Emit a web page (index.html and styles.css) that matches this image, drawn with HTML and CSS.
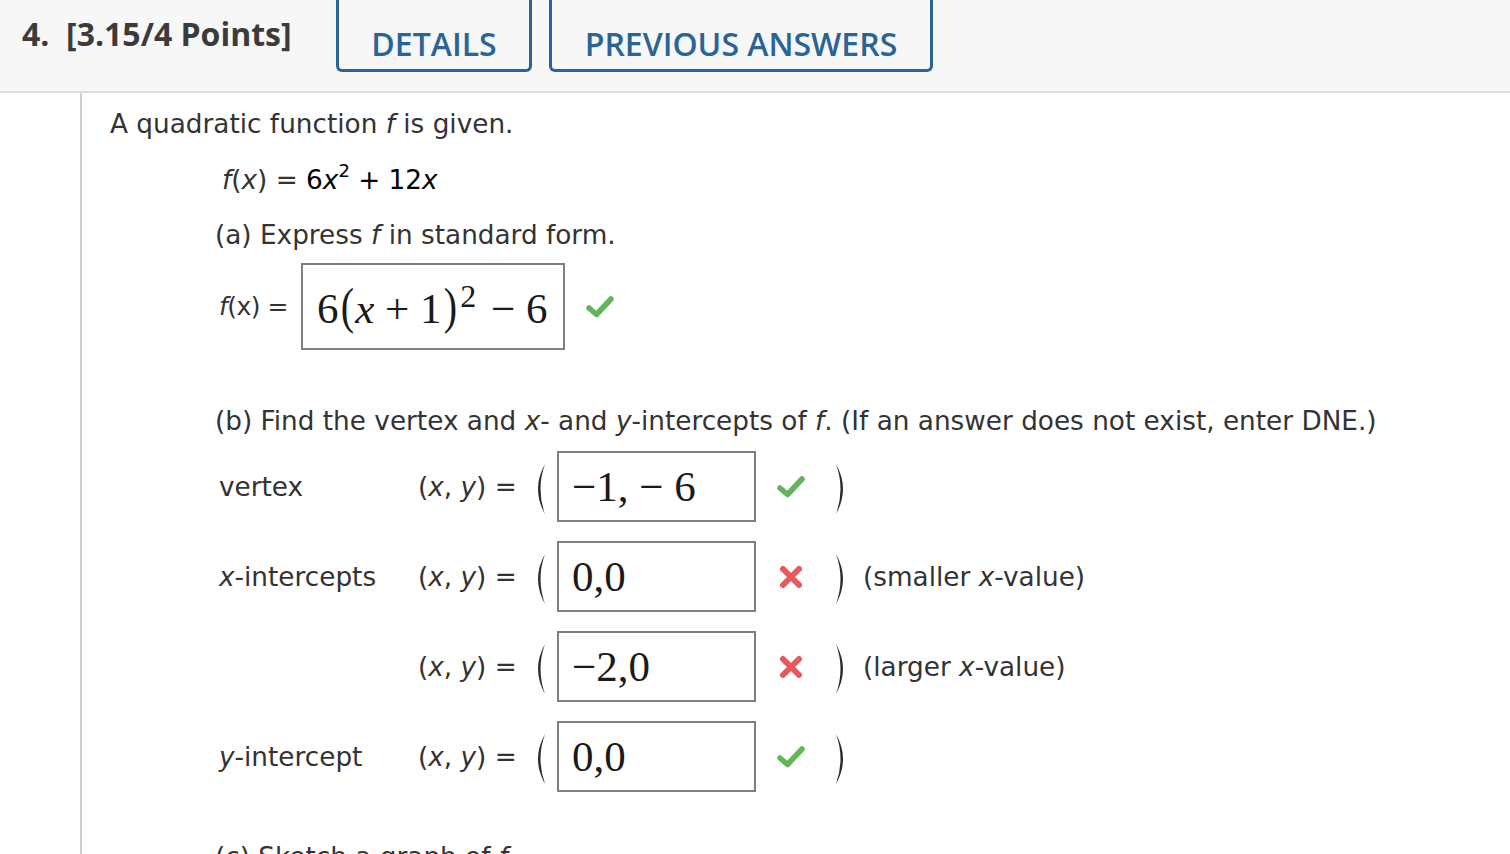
FILE: index.html
```html
<!DOCTYPE html>
<html>
<head>
<meta charset="utf-8">
<link rel="stylesheet" href="styles.css">
</head>
<body>
<header class="qhead">
  <div class="qnum">4.&nbsp; [3.15/4 Points]</div>
  <div class="btn btn-details">DETAILS</div>
  <div class="btn btn-prev">PREVIOUS ANSWERS</div>
</header>
<div class="qbody">
  <div class="gutter"></div>
  <div class="main">
    <p class="intro">A quadratic function <i>f</i> is given.</p>
    <div class="indent">
      <p class="given"><i>f</i>(<i>x</i>) = <span class="blk">6<i>x</i><sup>2</sup> + 12<i>x</i></span></p>
      <p class="part">(a) Express <i>f</i> in standard form.</p>
      <div class="ansrow">
        <span class="flabel"><i>f</i>(x) =</span>
        <div class="box box-a"><span class="math">6<span class="mp">(</span><i>x</i> + 1<span class="mp">)</span><sup>2</sup> − 6</span></div>
        <svg class="icon ok" viewBox="0 0 30 26"><path d="M4 14 L11.5 20.5 L26 5" /></svg>
      </div>
      <p class="part partb">(b) Find the vertex and <i>x</i>- and <i>y</i>-intercepts of <i>f</i>. (If an answer does not exist, enter DNE.)</p>
      <div class="rows">
        <div class="row">
          <span class="rlabel">vertex</span>
          <span class="eq">(<i>x</i>, <i>y</i>) =</span>
          <svg class="paren" viewBox="0 0 14 52"><path d="M13 1 Q-1 26 13 51 Q4 26 13 1 Z"/></svg>
          <div class="box box-b"><span class="math">−1, − 6</span></div>
          <svg class="icon ok" viewBox="0 0 30 26"><path d="M4 14 L11.5 20.5 L26 5" /></svg>
          <svg class="paren rp" viewBox="0 0 14 52"><path d="M1 1 Q15 26 1 51 Q10 26 1 1 Z"/></svg>
        </div>
        <div class="row">
          <span class="rlabel"><i>x</i>-intercepts</span>
          <span class="eq">(<i>x</i>, <i>y</i>) =</span>
          <svg class="paren" viewBox="0 0 14 52"><path d="M13 1 Q-1 26 13 51 Q4 26 13 1 Z"/></svg>
          <div class="box box-b"><span class="math">0,0</span></div>
          <svg class="icon bad" viewBox="0 0 30 30"><path d="M7 7 L23 23 M23 7 L7 23" /></svg>
          <svg class="paren rp" viewBox="0 0 14 52"><path d="M1 1 Q15 26 1 51 Q10 26 1 1 Z"/></svg>
          <span class="note">(smaller <i>x</i>-value)</span>
        </div>
        <div class="row">
          <span class="rlabel"></span>
          <span class="eq">(<i>x</i>, <i>y</i>) =</span>
          <svg class="paren" viewBox="0 0 14 52"><path d="M13 1 Q-1 26 13 51 Q4 26 13 1 Z"/></svg>
          <div class="box box-b"><span class="math">−2,0</span></div>
          <svg class="icon bad" viewBox="0 0 30 30"><path d="M7 7 L23 23 M23 7 L7 23" /></svg>
          <svg class="paren rp" viewBox="0 0 14 52"><path d="M1 1 Q15 26 1 51 Q10 26 1 1 Z"/></svg>
          <span class="note">(larger <i>x</i>-value)</span>
        </div>
        <div class="row">
          <span class="rlabel"><i>y</i>-intercept</span>
          <span class="eq">(<i>x</i>, <i>y</i>) =</span>
          <svg class="paren" viewBox="0 0 14 52"><path d="M13 1 Q-1 26 13 51 Q4 26 13 1 Z"/></svg>
          <div class="box box-b"><span class="math">0,0</span></div>
          <svg class="icon ok" viewBox="0 0 30 26"><path d="M4 14 L11.5 20.5 L26 5" /></svg>
          <svg class="paren rp" viewBox="0 0 14 52"><path d="M1 1 Q15 26 1 51 Q10 26 1 1 Z"/></svg>
        </div>
      </div>
      <p class="part partc">(c) Sketch a graph of <i>f</i>.</p>
    </div>
  </div>
</div>
</body>
</html>
```
FILE: styles.css
```css
html, body {
  margin: 0;
  padding: 0;
  background: #fff;
  overflow: hidden;
}
body {
  width: 1510px;
  height: 854px;
  font-family: "DejaVu Sans", Verdana, sans-serif;
  color: #333;
}
p { margin: 0; }

.qhead {
  background: #f7f7f7;
  border-bottom: 2px solid #dedede;
  display: flex;
  align-items: flex-start;
  box-sizing: border-box;
  height: 93px;
}
.qnum {
  font-family: "Open Sans", sans-serif;
  font-weight: 700;
  font-size: 32px;
  color: #3b3b3b;
  margin-left: 22px;
  margin-top: 12px;
  line-height: 44px;
  width: 314px;
  white-space: nowrap;
}
.btn {
  font-family: "Open Sans", sans-serif;
  font-weight: 600;
  font-size: 32px;
  color: #2a6496;
  border: 3px solid #2a6496;
  border-top: none;
  border-radius: 0 0 6px 6px;
  height: 72px;
  box-sizing: border-box;
  display: flex;
  align-items: flex-end;
  justify-content: center;
  padding-bottom: 5px;
  line-height: 40px;
}
.btn-details { width: 196px; }
.btn-prev { width: 384px; margin-left: 17px; }

.qbody {
  display: flex;
  height: 761px;
}
.gutter {
  width: 80px;
  border-right: 2px solid #cfcfcf;
  flex: none;
}
.main {
  padding-left: 28px;
  padding-top: 16px;
  font-size: 26.3px;
  line-height: 30px;
}
.indent { padding-left: 105px; }
.given { margin-top: 26px; padding-left: 7px; }
.given .blk { color: #000; }
.given sup { font-size: 18px; vertical-align: 0; position: relative; top: -12px; }
.part { margin-top: 22px; }

.ansrow {
  display: flex;
  align-items: center;
  margin-top: 13px;
}
.flabel { width: 86px; padding-left: 4px; box-sizing: border-box; font-size: 25px; letter-spacing: -0.5px; flex: none; }
.box {
  border: 2px solid #7f7f7f;
  box-sizing: border-box;
  display: flex;
  align-items: center;
  padding-left: 14px;
  flex: none;
}
.box-a { width: 264px; height: 87px; }
.box-b { width: 199px; height: 71px; padding-left: 13px; }
.math {
  font-family: "Liberation Serif", "DejaVu Serif", serif;
  font-size: 43px;
  color: #1a1a1a;
  white-space: nowrap;
}
.box-a .math { margin-top: 4px; }
.math sup { font-size: 32px; position: relative; top: -16px; vertical-align: 0; margin-left: 2px; margin-right: 4px; }
.math .mp { font-size: 50px; display: inline-block; transform: scaleX(0.8); }
.icon { width: 30px; height: 26px; margin-left: 20px; flex: none; }
.icon.ok path { stroke: #62b558; stroke-width: 5.5; fill: none; stroke-linecap: round; stroke-linejoin: round; }
.icon.bad { height: 30px; }
.icon.bad path { stroke: #e65a5e; stroke-width: 6; fill: none; stroke-linecap: round; }

.partb { margin-top: 56px; }
.rows { display: flex; flex-direction: column; gap: 19px; margin-top: 15px; }
.row { display: flex; align-items: center; height: 71px; }
.rlabel { width: 203px; padding-left: 4px; box-sizing: border-box; flex: none; }
.eq { width: 114px; flex: none; }
.paren { width: 14px; height: 52px; flex: none; margin-top: 4px; }
.paren path { fill: #2b2b2b; }
.row > .paren:first-of-type { margin-right: 11px; }
.rp { margin-left: 29px; }
.note { margin-left: 14px; white-space: nowrap; }
.partc { margin-top: 50px; }
```
